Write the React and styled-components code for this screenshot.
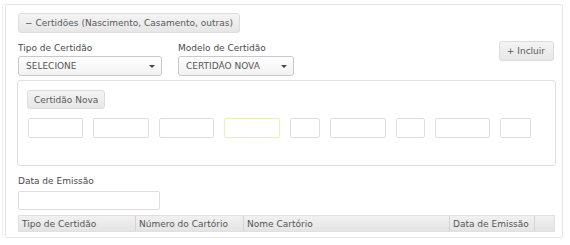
import React from "react";
import styled, { createGlobalStyle } from "styled-components";

const GlobalStyle = createGlobalStyle`
  * { box-sizing: border-box; }
  body {
    margin: 0;
    background: #fff;
    font-family: "DejaVu Sans", Verdana, sans-serif;
    font-size: 9px;
    color: #555;
  }
`;

const Panel = styled.div`
  margin: 4px 7px 0 5px;
  height: 234px;
  border: 1px solid #e4e4e4;
  border-radius: 2px;
  padding: 8px 8px 0 12px;
  box-shadow: -2px 0 0 #fff, -3px 0 0 #efefef;
`;

const Button = styled.div`
  display: inline-flex;
  align-items: center;
  height: ${(p) => p.$h || 20}px;
  padding: 0 6px;
  border: 1px solid #dcdcdc;
  border-radius: 3px;
  background: linear-gradient(#f4f4f4, #e6e6e6);
  color: #5a5a5a;
  white-space: nowrap;
`;

const Legend = styled(Button)`
  padding: 0 6px 0 6px;
  gap: 3px;
`;

const Row = styled.div`
  display: flex;
  align-items: flex-start;
  margin-top: 9px;
`;

const Field = styled.div`
  display: flex;
  flex-direction: column;
  width: ${(p) => p.$w}px;
  margin-right: ${(p) => p.$mr || 0}px;
`;

const Label = styled.div`
  height: 14px;
  color: #4a4a4a;
  line-height: 13px;
`;

const Select = styled.div`
  display: flex;
  align-items: center;
  justify-content: space-between;
  height: 20px;
  padding: 0 6px 0 7px;
  border: 1px solid #c8c8c8;
  border-radius: 3px;
  background: linear-gradient(#fff, #f2f2f2);
  color: #555;
  box-shadow: inset 0 1px 0 #fff;
`;

const Caret = styled.span`
  width: 0;
  height: 0;
  border-left: 3px solid transparent;
  border-right: 3px solid transparent;
  border-top: 3px solid #444;
`;

const Include = styled(Button)`
  margin-left: auto;
  margin-top: -1px;
  padding: 0 8px 0 7px;
  gap: 3px;
`;

const Inner = styled.div`
  margin: 4px 0 0 -1px;
  width: 539px;
  height: 86px;
  border: 1px solid #dfdfdf;
  border-radius: 3px;
  padding: 9px 10px 0 9px;
`;

const Inputs = styled.div`
  display: flex;
  gap: 10px;
  margin-top: 9px;
  padding-left: 1px;
`;

const Box = styled.div`
  width: ${(p) => p.$w}px;
  height: 20px;
  border: 1px solid ${(p) => (p.$focus ? "#ecefc4" : "#dedede")};
  border-radius: 2px;
  background: #fff;
  box-shadow: ${(p) => (p.$focus ? "0 0 2px #f3f6d8" : "none")};
`;

const DateBlock = styled.div`
  margin-top: 9px;
`;

const DateInput = styled(Box)`
  width: 142px;
  height: 19px;
  margin-top: 2px;
`;

const Table = styled.div`
  display: grid;
  grid-template-columns: 117px 108px 206px 85px 1fr;
  margin-top: 5px;
  width: 537px;
  height: 17px;
  background: linear-gradient(#f1f1f1, #e4e4e4);
  border: 1px solid #e0e0e0;
`;

const Th = styled.div`
  display: flex;
  align-items: center;
  padding-left: 3px;
  color: #555;
  border-right: 1px solid #d4d4d4;
  &:last-child { border-right: none; }
`;

const fields = [55, 56, 55, 56, 30, 56, 29, 55, 31];

export default function App() {
  return (
    <>
      <GlobalStyle />
      <Panel>
        <Legend>
          <span>−</span>
          <span>Certidões (Nascimento, Casamento, outras)</span>
        </Legend>
        <Row>
          <Field $w={144} $mr={16}>
            <Label>Tipo de Certidão</Label>
            <Select>
              <span>SELECIONE</span>
              <Caret />
            </Select>
          </Field>
          <Field $w={116}>
            <Label>Modelo de Certidão</Label>
            <Select>
              <span>CERTIDÃO NOVA</span>
              <Caret />
            </Select>
          </Field>
          <Include>
            <span>+</span>
            <span>Incluir</span>
          </Include>
        </Row>
        <Inner>
          <Button $h={19}>Certidão Nova</Button>
          <Inputs>
            {fields.map((w, i) => (
              <Box key={i} $w={w} $focus={i === 3} />
            ))}
          </Inputs>
        </Inner>
        <DateBlock>
          <Label>Data de Emissão</Label>
          <DateInput />
        </DateBlock>
        <Table>
          <Th>Tipo de Certidão</Th>
          <Th>Número do Cartório</Th>
          <Th>Nome Cartório</Th>
          <Th>Data de Emissão</Th>
          <Th />
        </Table>
      </Panel>
    </>
  );
}
